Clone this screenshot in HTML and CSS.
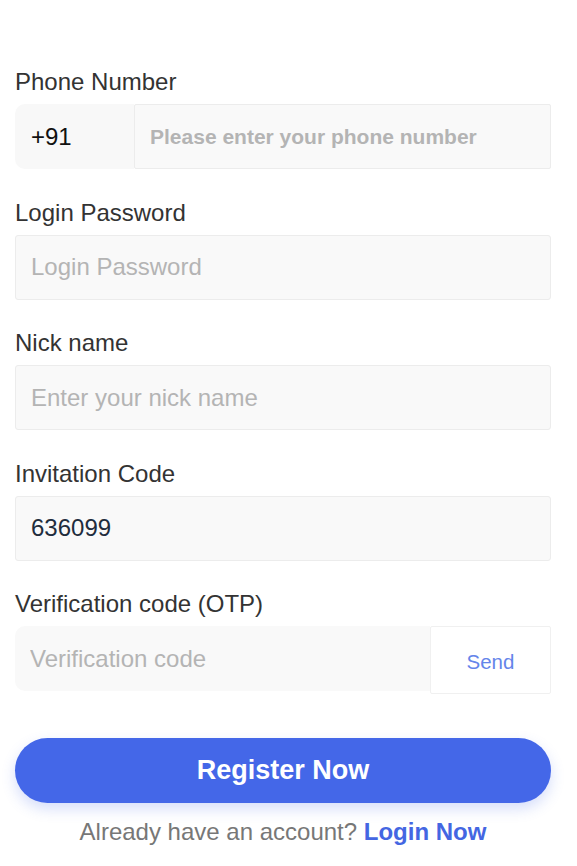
FILE: index.html
```html
<!DOCTYPE html>
<html lang="en">
<head>
<meta charset="utf-8">
<title>Register</title>
<link rel="stylesheet" href="styles.css">
</head>
<body>
<form class="form">
  <div class="field">
    <label class="label">Phone Number</label>
    <div class="phone-row">
      <span class="prefix">+91</span>
      <input class="input input-phone" type="text" placeholder="Please enter your phone number">
    </div>
  </div>
  <div class="field">
    <label class="label">Login Password</label>
    <input class="input" type="password" placeholder="Login Password">
  </div>
  <div class="field">
    <label class="label">Nick name</label>
    <input class="input" type="text" placeholder="Enter your nick name">
  </div>
  <div class="field">
    <label class="label">Invitation Code</label>
    <input class="input" type="text" value="636099">
  </div>
  <div class="field">
    <label class="label">Verification code (OTP)</label>
    <div class="otp-row">
      <input class="input input-otp" type="text" placeholder="Verification code">
      <button class="send" type="button">Send</button>
    </div>
  </div>
  <button class="register" type="button">Register Now</button>
  <p class="footer">Already have an account? <a class="login" href="#">Login Now</a></p>
</form>
</body>
</html>
```

FILE: styles.css
```css
* { box-sizing: border-box; }
html, body { margin: 0; background: #fff; }
body {
  font-family: "Liberation Sans", Arial, sans-serif;
  color: #333;
}
.form {
  padding: 67px 26px 0 15px;
  display: flex;
  flex-direction: column;
}
.field {
  display: flex;
  flex-direction: column;
  margin-bottom: 28.5px;
}
.label {
  font-size: 24px;
  line-height: 30px;
  color: #333;
  margin-bottom: 7px;
}
.input {
  display: block;
  width: 100%;
  height: 65px;
  border: 1px solid #ececec;
  border-radius: 3px;
  background: #f9f9f9;
  padding: 0 15px;
  font-family: "Liberation Sans", Arial, sans-serif;
  font-size: 24px;
  color: #1f2d3d;
  outline: none;
}
.input::placeholder { color: #b4b4b4; }
.phone-row, .otp-row {
  display: flex;
  align-items: stretch;
}
.prefix {
  width: 119px;
  flex: none;
  height: 65px;
  display: flex;
  align-items: center;
  padding-left: 16px;
  background: #f8f8f8;
  border-radius: 10px 0 0 10px;
  font-size: 24px;
  color: #111;
}
.input-phone {
  flex: 1;
  border-radius: 2px;
  font-weight: bold;
  font-size: 21px;
}
.input-otp {
  flex: 1;
  border: none;
  border-radius: 10px 0 0 10px;
  background: #f9f9f9;
}
.otp-row { align-items: flex-start; }
.send {
  flex: none;
  width: 121px;
  height: 68px;
  background: #fff;
  border: 1px solid #f0f0f0;
  border-radius: 2px;
  color: #6485ea;
  font-family: "Liberation Sans", Arial, sans-serif;
  font-size: 20.5px;
  padding: 4px 0 0;
}
.register {
  margin-top: 15px;
  height: 65px;
  width: 100%;
  border: none;
  border-radius: 33px;
  background: #4467e8;
  color: #fff;
  font-family: "Liberation Sans", Arial, sans-serif;
  font-weight: bold;
  font-size: 27px;
  box-shadow: 0 6px 14px rgba(68, 103, 232, 0.22);
}
.footer {
  margin: 15px 0 0;
  text-align: center;
  font-size: 24px;
  color: #777;
}
.login {
  color: #4466e2;
  font-weight: bold;
  text-decoration: none;
}
```
